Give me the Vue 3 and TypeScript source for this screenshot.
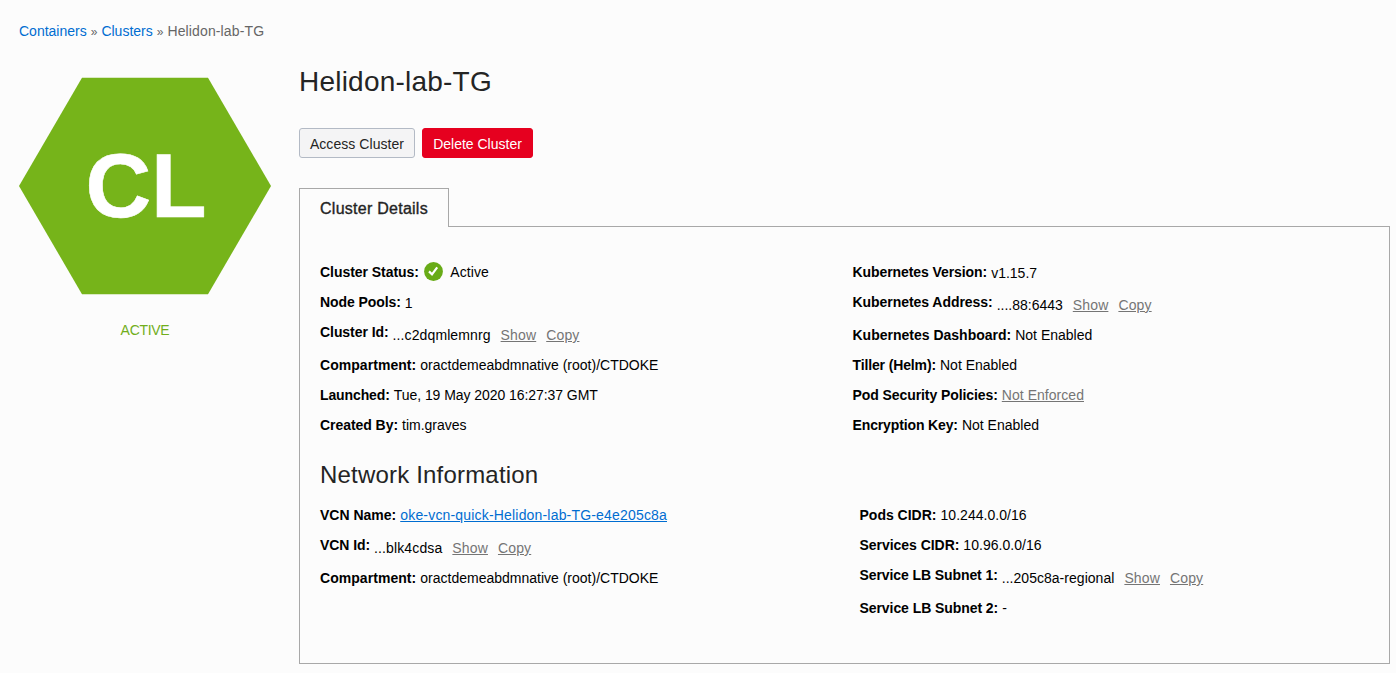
<script setup lang="ts">
interface Field {
  label: string
  value: string
  kind?: 'status' | 'masked' | 'link' | 'muted' | 'plain'
  labelTracking?: number
  valueTracking?: number
}

const clusterLeft: Field[] = [
  { label: 'Cluster Status:', value: 'Active', kind: 'status', labelTracking: -0.04, valueTracking: 0.08 },
  { label: 'Node Pools:', value: '1', kind: 'plain', labelTracking: -0.08 },
  { label: 'Cluster Id:', value: '...c2dqmlemnrg', kind: 'masked', labelTracking: -0.06, valueTracking: 0.11 },
  { label: 'Compartment:', value: 'oractdemeabdmnative (root)/CTDOKE', labelTracking: 0.05 },
  { label: 'Launched:', value: 'Tue, 19 May 2020 16:27:37 GMT', labelTracking: -0.11, valueTracking: -0.06 },
  { label: 'Created By:', value: 'tim.graves', labelTracking: -0.05 },
]

const clusterRight: Field[] = [
  { label: 'Kubernetes Version:', value: 'v1.15.7', kind: 'plain', labelTracking: -0.08 },
  { label: 'Kubernetes Address:', value: '....88:6443', kind: 'masked', labelTracking: -0.05 },
  { label: 'Kubernetes Dashboard:', value: 'Not Enabled' },
  { label: 'Tiller (Helm):', value: 'Not Enabled', labelTracking: -0.13 },
  { label: 'Pod Security Policies:', value: 'Not Enforced', kind: 'muted', labelTracking: -0.08, valueTracking: 0.04 },
  { label: 'Encryption Key:', value: 'Not Enabled', labelTracking: -0.13 },
]

const networkLeft: Field[] = [
  { label: 'VCN Name:', value: 'oke-vcn-quick-Helidon-lab-TG-e4e205c8a', kind: 'link', valueTracking: 0.18 },
  { label: 'VCN Id:', value: '...blk4cdsa', kind: 'masked', labelTracking: -0.08, valueTracking: 0.13 },
  { label: 'Compartment:', value: 'oractdemeabdmnative (root)/CTDOKE', labelTracking: 0.05 },
]

const networkRight: Field[] = [
  { label: 'Pods CIDR:', value: '10.244.0.0/16', valueTracking: 0.04 },
  { label: 'Services CIDR:', value: '10.96.0.0/16', labelTracking: -0.04, valueTracking: 0.04 },
  { label: 'Service LB Subnet 1:', value: '...205c8a-regional', kind: 'masked', labelTracking: -0.09, valueTracking: 0.03 },
  { label: 'Service LB Subnet 2:', value: '-', labelTracking: -0.07 },
]

const sections = [
  { id: 'cluster', title: '', columns: [clusterLeft, clusterRight] },
  { id: 'network', title: 'Network Information', columns: [networkLeft, networkRight] },
]

const tracking = (amount = 0) => ({ letterSpacing: `${amount}px` })
</script>

<template>
  <div class="page">
    <nav class="crumbs">
      <a class="crumb">Containers</a><span class="sep">»</span><a class="crumb">Clusters</a><span class="sep">»</span><span class="current">Helidon-lab-TG</span>
    </nav>
    <div class="layout">
      <aside class="side">
        <svg class="hexagon" width="252" height="218" viewBox="0 0 252 218">
          <polygon points="0,109 63,0.7 189,0.7 252,109 189,217.2 63,217.2" fill="#76b41a" />
          <text x="66.5 132" y="140">CL</text>
        </svg>
        <div class="state">ACTIVE</div>
      </aside>
      <main class="main">
        <h1 class="title">Helidon-lab-TG</h1>
        <div class="actions">
          <button class="btn">Access Cluster</button>
          <button class="btn danger">Delete Cluster</button>
        </div>
        <div class="tab">Cluster Details</div>
        <div class="panel">
          <section v-for="s in sections" :key="s.id" :class="s.id">
            <h2 v-if="s.title" class="heading">{{ s.title }}</h2>
            <div class="columns">
              <div v-for="(col, i) in s.columns" :key="i" class="column">
                <div v-for="f in col" :key="f.label" class="field" :class="f.kind">
                  <span class="label" :style="tracking(f.labelTracking)">{{ f.label }}</span>
                  <svg v-if="f.kind === 'status'" class="check" width="19" height="19" viewBox="0 0 19 19">
                    <circle cx="9.5" cy="9.5" r="9.4" fill="#68ab17" />
                    <path d="M5 9.4 L8 12.4 L13.2 5.4" fill="none" stroke="#fff" stroke-width="2.2" />
                  </svg>
                  <span class="value" :style="tracking(f.valueTracking)">{{ f.value }}</span>
                  <template v-if="f.kind === 'masked'">
                    <a class="act">Show</a>
                    <a class="act">Copy</a>
                  </template>
                </div>
              </div>
            </div>
          </section>
        </div>
      </main>
    </div>
  </div>
</template>

<style>
body {
  background: #fcfcfc;
}
</style>

<style scoped>
.page {
  box-sizing: border-box;
  width: 1396px;
  height: 673px;
  padding: 21px 6px 0 19px;
  overflow: hidden;
  background: #fcfcfc;
  font: 14px/20px "Liberation Sans", Arial, sans-serif;
  color: #000;
  white-space: nowrap;
}
.crumbs {
  height: 20px;
  color: #666;
}
.crumb {
  color: #006dd1;
}
.current {
  letter-spacing: 0.13px;
}
.sep {
  margin: 0 4px;
  font-size: 12px;
}
.layout {
  display: flex;
  gap: 28px;
}
.side {
  width: 252px;
  padding-top: 36px;
}
.hexagon {
  display: block;
}
.hexagon text {
  font: bold 91px "Liberation Sans", Arial, sans-serif;
  fill: #fff;
  stroke: #fff;
  stroke-width: 0.6px;
}
.state {
  margin-top: 25px;
  text-align: center;
  letter-spacing: -0.3px;
  color: #71ae1b;
}
.main {
  width: 1091px;
}
.title {
  margin: 23px 0 0;
  font-size: 28px;
  font-weight: 400;
  line-height: 36px;
  letter-spacing: 0.22px;
  color: #242424;
}
.actions {
  display: flex;
  gap: 7px;
  margin-top: 28px;
}
.btn {
  box-sizing: border-box;
  width: 116px;
  height: 30px;
  padding: 2px 0 0;
  border: 1px solid #b3bac5;
  border-radius: 3px;
  background: #f4f4f5;
  color: #242424;
  font: inherit;
  letter-spacing: 0.06px;
}
.btn.danger {
  width: 111px;
  border-color: #e6001f;
  background: #e6001f;
  color: #fff;
  letter-spacing: 0;
}
.tab {
  position: relative;
  box-sizing: border-box;
  width: 150px;
  height: 39px;
  margin: 30px 0 -1px;
  padding: 10px 0 0 20px;
  border: 1px solid #a8a8a8;
  border-bottom: 0;
  background: #fcfcfc;
  font-size: 16px;
  letter-spacing: 0.26px;
  color: #242424;
  -webkit-text-stroke: 0.35px #242424;
}
.panel {
  box-sizing: border-box;
  height: 438px;
  padding: 35px 20px 0;
  border: 1px solid #a8a8a8;
}
.columns {
  display: grid;
  grid-template-columns: 532.5px 1fr;
}
.network .columns {
  grid-template-columns: 539.5px 1fr;
}
.heading {
  margin: 14px 0 14px;
  font-size: 24px;
  font-weight: 400;
  line-height: 32px;
  letter-spacing: 0.19px;
  color: #242424;
}
.field {
  display: flex;
  height: 20px;
  margin-bottom: 10px;
}
.label {
  margin-right: 4px;
  font-weight: 700;
}
.check {
  margin: 0 7px 0 1.3px;
}
.plain .value {
  margin-top: 1px;
}
.masked {
  height: 23px;
}
.masked .value,
.act {
  margin-top: 3px;
}
.act {
  margin-left: 10px;
  letter-spacing: 0.14px;
  color: #757575;
  text-decoration: underline;
}
.link .value {
  color: #006dd1;
  text-decoration: underline;
}
.muted .value {
  color: #757575;
  text-decoration: underline;
}
</style>
